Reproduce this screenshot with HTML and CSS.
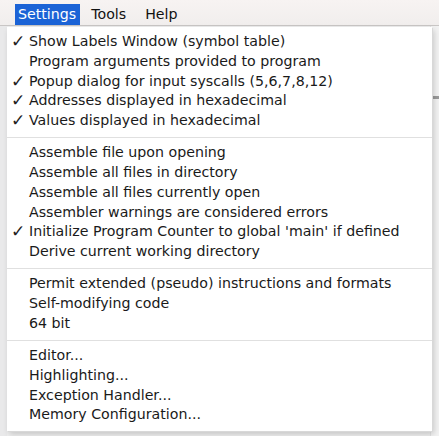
FILE: index.html
```html
<!DOCTYPE html>
<html>
<head>
<meta charset="utf-8">
<link rel="stylesheet" href="styles.css">
</head>
<body>
<div class="app">
  <div class="menubar">
    <span class="mb-item active">Settings</span>
    <span class="mb-item">Tools</span>
    <span class="mb-item">Help</span>
  </div>
  <div class="backdrop">
    <div class="side-left"></div>
    <div class="side-right"><div class="scroll-mark"></div></div>
  </div>
  <div class="menu">
    <div class="item"><span class="check">✓</span>Show Labels Window (symbol table)</div>
    <div class="item"><span class="check"></span>Program arguments provided to program</div>
    <div class="item"><span class="check">✓</span>Popup dialog for input syscalls (5,6,7,8,12)</div>
    <div class="item"><span class="check">✓</span>Addresses displayed in hexadecimal</div>
    <div class="item"><span class="check">✓</span>Values displayed in hexadecimal</div>
    <div class="sep"></div>
    <div class="item"><span class="check"></span>Assemble file upon opening</div>
    <div class="item"><span class="check"></span>Assemble all files in directory</div>
    <div class="item"><span class="check"></span>Assemble all files currently open</div>
    <div class="item"><span class="check"></span>Assembler warnings are considered errors</div>
    <div class="item"><span class="check">✓</span>Initialize Program Counter to global 'main' if defined</div>
    <div class="item"><span class="check"></span>Derive current working directory</div>
    <div class="sep"></div>
    <div class="item"><span class="check"></span>Permit extended (pseudo) instructions and formats</div>
    <div class="item"><span class="check"></span>Self-modifying code</div>
    <div class="item"><span class="check"></span>64 bit</div>
    <div class="sep"></div>
    <div class="item"><span class="check"></span>Editor...</div>
    <div class="item"><span class="check"></span>Highlighting...</div>
    <div class="item"><span class="check"></span>Exception Handler...</div>
    <div class="item"><span class="check"></span>Memory Configuration...</div>
  </div>
</div>
</body>
</html>
```
FILE: styles.css
```css
html, body {
  margin: 0;
  padding: 0;
}
body {
  width: 439px;
  height: 436px;
  overflow: hidden;
  background: #eeeeee;
  font-family: "DejaVu Sans", "Noto Sans", sans-serif;
}
.app {
  position: relative;
  width: 439px;
  height: 436px;
}
.menubar {
  height: 26px;
  box-sizing: border-box;
  padding: 4px 0 0 15px;
  display: flex;
  align-items: stretch;
  background: linear-gradient(#f7f3f2, #f1eeed);
  border-bottom: 1px solid #c9c6c5;
  font-size: 14.2px;
  color: #111;
}
.mb-item {
  display: flex;
  align-items: center;
  padding: 0 9px 0 10px;
  line-height: 21px;
}
.mb-item.active {
  background: #1b63d6;
  color: #fff;
  padding: 0 4px 0 3px;
  margin-right: 1px;
}
.backdrop {
  display: flex;
  justify-content: space-between;
  height: 410px;
}
.side-left {
  width: 7px;
  background: #e9e9ea;
}
.side-right {
  width: 8px;
  background: #f2f2f2;
  border-left: 1px solid #e2e2e2;
  padding-top: 70px;
}
.scroll-mark {
  height: 3px;
  background: #9a9a9a;
}
.menu {
  position: absolute;
  left: 7px;
  top: 27px;
  width: 425px;
  box-sizing: border-box;
  background: #fff;
  padding: 5px 0 6px 0;
  box-shadow: 1px 1px 0 #d8d8d8, 2px 3px 6px rgba(0,0,0,0.18);
  font-size: 14.2px;
  color: #1a1a1a;
  display: flex;
  flex-direction: column;
}
.item {
  height: 19.75px;
  line-height: 19.75px;
  display: flex;
  align-items: center;
  white-space: nowrap;
}
.check {
  width: 22px;
  padding-left: 4px;
  box-sizing: border-box;
  flex: none;
  font-size: 17px;
  font-weight: bold;
  color: #222;
}
.sep {
  height: 1px;
  background: #e0e0e0;
  margin: 6px 0 5.5px 0;
}
```
